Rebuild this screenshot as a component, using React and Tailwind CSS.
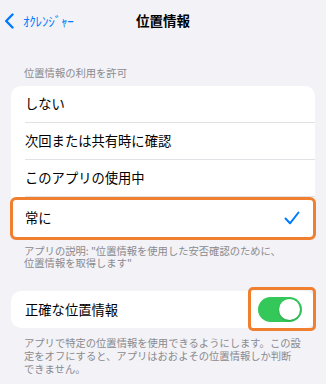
import React from "react";

const font = { fontFamily: '"Noto Sans CJK JP", "Noto Sans", sans-serif' };

function Row({ children, last, height = "h-[37px]" }) {
  return (
    <div className={`pl-[14px] ${height}`}>
      <div
        className={`h-full flex items-center pr-[16px] ${
          last ? "" : "border-b border-[#e2e2e6]"
        }`}
      >
        {children}
      </div>
    </div>
  );
}

export default function App() {
  return (
    <div
      className="w-[326px] h-[384px] bg-[#f2f2f7] overflow-hidden text-black"
      style={font}
    >
      {/* Header */}
      <div className="h-[41px] grid grid-cols-[1fr_auto_1fr] items-center">
        <div className="flex items-center pl-[4px] text-[#007aff]">
          <svg width="11" height="16" viewBox="0 0 11 16" className="mr-[8px]">
            <polyline
              points="8.5,1.5 2.2,8 8.5,14.5"
              fill="none"
              stroke="#007aff"
              strokeWidth="2.4"
              strokeLinecap="round"
              strokeLinejoin="round"
            />
          </svg>
          <span className="text-[13px] leading-none tracking-[-0.2px]">ｵｸﾚﾝｼﾞｬｰ</span>
        </div>
        <div className="text-[13.5px] font-bold leading-none">位置情報</div>
        <div />
      </div>

      <div className="mt-[25px] pl-[24px] text-[10.3px] leading-[14px] text-[#8a8a8e]">
        位置情報の利用を許可
      </div>

      <div className="mt-[6px] mx-[11px] bg-white rounded-[10px]">
        <Row>
          <span className="text-[13.3px]">しない</span>
        </Row>
        <Row>
          <span className="text-[13.3px]">次回または共有時に確認</span>
        </Row>
        <Row>
          <span className="text-[13.3px]">このアプリの使用中</span>
        </Row>
        <div className="relative h-[41px] pl-[14px] pr-[15px] flex items-center justify-between">
          <span className="text-[13.3px]">常に</span>
          <svg width="16" height="14" viewBox="0 0 16 14">
            <polyline
              points="1.5,7.5 6,12.3 14.5,1.5"
              fill="none"
              stroke="#007aff"
              strokeWidth="2"
              strokeLinecap="round"
              strokeLinejoin="round"
            />
          </svg>
          <div className="absolute -left-[1px] -right-[1px] top-0 -bottom-[2px] border-[3px] border-[#f08030] rounded-[6px] pointer-events-none" />
        </div>
      </div>

      <div className="mt-[7px] pl-[24px] text-[10.3px] leading-[12px] text-[#8a8a8e]">
        アプリの説明: "位置情報を使用した安否確認のために、
        <br />
        位置情報を取得します"
      </div>

      <div className="mt-[22px] mx-[11px] bg-white rounded-[10px] h-[37px] pl-[14px] pr-[13px] flex items-center justify-between">
        <span className="text-[13.3px]">正確な位置情報</span>
        <div className="relative">
          <div className="w-[44px] h-[25px] rounded-full bg-[#34c759] flex items-center justify-end pr-[2px]">
            <div className="w-[21px] h-[21px] rounded-full bg-white shadow-[0_1px_2px_rgba(0,0,0,0.2)]" />
          </div>
          <div className="absolute -left-[10px] -right-[14px] -top-[10px] -bottom-[9px] border-[3px] border-[#f08030] rounded-[5px] pointer-events-none" />
        </div>
      </div>

      <div className="mt-[8px] pl-[24px] text-[10.3px] leading-[13px] text-[#8a8a8e]">
        アプリで特定の位置情報を使用できるようにします。この設
        <br />
        定をオフにすると、アプリはおおよその位置情報しか判断
        <br />
        できません。
      </div>
    </div>
  );
}
